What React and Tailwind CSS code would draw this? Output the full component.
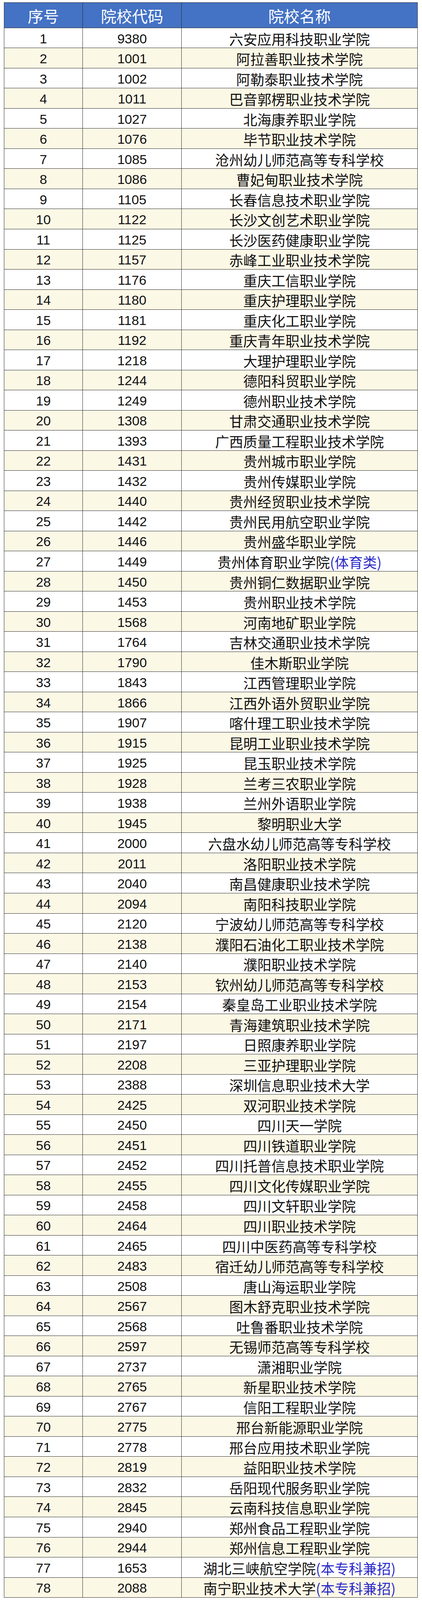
import React from 'react';

const rows = [
  ['1', '9380', '六安应用科技职业学院'],
  ['2', '1001', '阿拉善职业技术学院'],
  ['3', '1002', '阿勒泰职业技术学院'],
  ['4', '1011', '巴音郭楞职业技术学院'],
  ['5', '1027', '北海康养职业学院'],
  ['6', '1076', '毕节职业技术学院'],
  ['7', '1085', '沧州幼儿师范高等专科学校'],
  ['8', '1086', '曹妃甸职业技术学院'],
  ['9', '1105', '长春信息技术职业学院'],
  ['10', '1122', '长沙文创艺术职业学院'],
  ['11', '1125', '长沙医药健康职业学院'],
  ['12', '1157', '赤峰工业职业技术学院'],
  ['13', '1176', '重庆工信职业学院'],
  ['14', '1180', '重庆护理职业学院'],
  ['15', '1181', '重庆化工职业学院'],
  ['16', '1192', '重庆青年职业技术学院'],
  ['17', '1218', '大理护理职业学院'],
  ['18', '1244', '德阳科贸职业学院'],
  ['19', '1249', '德州职业技术学院'],
  ['20', '1308', '甘肃交通职业技术学院'],
  ['21', '1393', '广西质量工程职业技术学院'],
  ['22', '1431', '贵州城市职业学院'],
  ['23', '1432', '贵州传媒职业学院'],
  ['24', '1440', '贵州经贸职业技术学院'],
  ['25', '1442', '贵州民用航空职业学院'],
  ['26', '1446', '贵州盛华职业学院'],
  ['27', '1449', '贵州体育职业学院', '(体育类)'],
  ['28', '1450', '贵州铜仁数据职业学院'],
  ['29', '1453', '贵州职业技术学院'],
  ['30', '1568', '河南地矿职业学院'],
  ['31', '1764', '吉林交通职业技术学院'],
  ['32', '1790', '佳木斯职业学院'],
  ['33', '1843', '江西管理职业学院'],
  ['34', '1866', '江西外语外贸职业学院'],
  ['35', '1907', '喀什理工职业技术学院'],
  ['36', '1915', '昆明工业职业技术学院'],
  ['37', '1925', '昆玉职业技术学院'],
  ['38', '1928', '兰考三农职业学院'],
  ['39', '1938', '兰州外语职业学院'],
  ['40', '1945', '黎明职业大学'],
  ['41', '2000', '六盘水幼儿师范高等专科学校'],
  ['42', '2011', '洛阳职业技术学院'],
  ['43', '2040', '南昌健康职业技术学院'],
  ['44', '2094', '南阳科技职业学院'],
  ['45', '2120', '宁波幼儿师范高等专科学校'],
  ['46', '2138', '濮阳石油化工职业技术学院'],
  ['47', '2140', '濮阳职业技术学院'],
  ['48', '2153', '钦州幼儿师范高等专科学校'],
  ['49', '2154', '秦皇岛工业职业技术学院'],
  ['50', '2171', '青海建筑职业技术学院'],
  ['51', '2197', '日照康养职业学院'],
  ['52', '2208', '三亚护理职业学院'],
  ['53', '2388', '深圳信息职业技术大学'],
  ['54', '2425', '双河职业技术学院'],
  ['55', '2450', '四川天一学院'],
  ['56', '2451', '四川铁道职业学院'],
  ['57', '2452', '四川托普信息技术职业学院'],
  ['58', '2455', '四川文化传媒职业学院'],
  ['59', '2458', '四川文轩职业学院'],
  ['60', '2464', '四川职业技术学院'],
  ['61', '2465', '四川中医药高等专科学校'],
  ['62', '2483', '宿迁幼儿师范高等专科学校'],
  ['63', '2508', '唐山海运职业学院'],
  ['64', '2567', '图木舒克职业技术学院'],
  ['65', '2568', '吐鲁番职业技术学院'],
  ['66', '2597', '无锡师范高等专科学校'],
  ['67', '2737', '潇湘职业学院'],
  ['68', '2765', '新星职业技术学院'],
  ['69', '2767', '信阳工程职业学院'],
  ['70', '2775', '邢台新能源职业学院'],
  ['71', '2778', '邢台应用技术职业学院'],
  ['72', '2819', '益阳职业技术学院'],
  ['73', '2832', '岳阳现代服务职业学院'],
  ['74', '2845', '云南科技信息职业学院'],
  ['75', '2940', '郑州食品工程职业学院'],
  ['76', '2944', '郑州信息工程职业学院'],
  ['77', '1653', '湖北三峡航空学院', '(本专科兼招)'],
  ['78', '2088', '南宁职业技术大学', '(本专科兼招)'],
];

const cjk = "font-['Noto_Sans_CJK_SC',sans-serif]";
const num = "font-['Liberation_Sans',Arial,sans-serif]";

// 表格按屏幕高度铺满，行高比例与原图一致（表头 118 : 行 92）
export default function App() {
  return (
    <div className="bg-white w-[1080px] h-screen flex flex-col overflow-hidden">
      <div className="flex-[10] min-h-0" />
      <div className="flex-[7292] min-h-0 ml-[10px] w-[1059px] flex flex-col border border-[#2e2e2e]">
        {/* 表头 */}
        <div className={`flex-[117] min-h-0 grid grid-cols-[201px_253px_1fr] bg-[#4472c4] text-white text-[40px] leading-none ${cjk} border-b border-[#2e2e2e]`}>
          <div className="flex items-center justify-center pt-[3px] border-r border-[#2e2e2e]">序号</div>
          <div className="flex items-center justify-center pt-[3px] border-r border-[#2e2e2e]">院校代码</div>
          <div className="flex items-center justify-center pt-[3px]">院校名称</div>
        </div>

        {rows.map(([no, code, name, note], i) => (
          <div
            key={no}
            className={`flex-[92] min-h-0 grid grid-cols-[201px_253px_1fr] leading-none text-[#111] ${i % 2 === 1 ? 'bg-[#fcf8e6]' : 'bg-white'} ${i < rows.length - 1 ? 'border-b border-[#2e2e2e]' : ''}`}
          >
            <div className={`flex items-center justify-center pt-[3px] border-r border-[#2e2e2e] ${num} text-[34px]`}>
              {no}
            </div>
            <div className={`flex items-center justify-center pt-[3px] border-r border-[#2e2e2e] ${num} text-[34px]`}>
              {code}
            </div>
            <div className={`flex items-center justify-center pt-[3px] text-[36px] whitespace-nowrap ${cjk}`}>
              <span>{name}</span>
              {note && <span className="text-[#2a2ac8]">{note}</span>}
            </div>
          </div>
        ))}
      </div>
      <div className="flex-[11] min-h-0" />
    </div>
  );
}
